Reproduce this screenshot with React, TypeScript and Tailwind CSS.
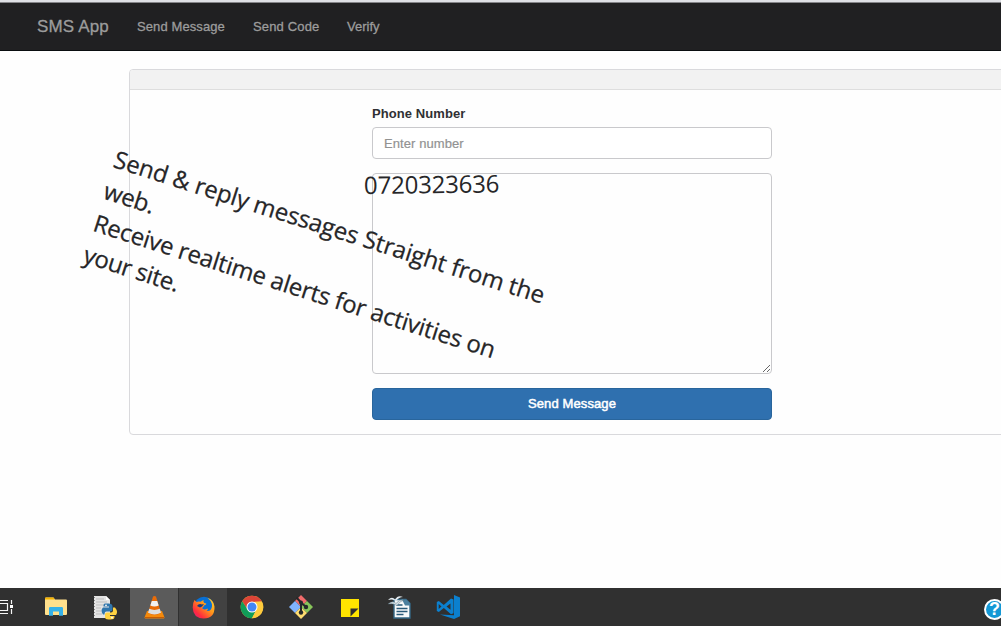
import React from 'react';

const Explorer = () => (
  <svg width="22" height="20" viewBox="0 0 22 20">
    <path d="M0 1.5Q0 .5 1 .5h7.500l1.500 2h11q1 0 1 1V17q0 1-1 1H1q-1 0-1-1z" fill="#ffe08c" />
    <path d="M0 1.5Q0 .5 1 .5h7.500l1.200 2H0z" fill="#f5b301" />
    <path d="M4 18.700v-7.400q0-1.300 1.300-1.300h11.400q1.300 0 1.300 1.300v7.400h-4V14.500H8v4.200z" fill="#35b1e8" />
  </svg>
);

const PythonFile = () => (
  <svg width="25" height="25" viewBox="0 0 25 25">
    <path d="M1 1h12l4 4v18H1z" fill="#e4e4e4" />
    <path d="M13 1l4 4h-4z" fill="#fff" />
    <path d="M3 4h8M3 7h11M3 10h8M3 13h5M3 16h5M3 19h6" stroke="#bdbdbd" />
    <path d="M1.500 2v21" stroke="#8a8a8a" strokeDasharray="1 2" />
    <path d="M12 8.500h3.500q4 0 4 3v3q0 2-2 2h-4q-2 0-2 3H10q-3-4 0-7h6v-1h-5.500v-1q0-2 1.500-2z" fill="#2f75ac" />
    <path d="M20 12.500h2q3.500 4 1 7.500h-6v1h4.500v1q0 2.500-4 2.500h-2q-3.500 0-3.500-2.500v-2.500q0-2 2-2h4q2 0 2-2z" fill="#ffd342" />
    <circle cx="13" cy="10.300" r=".9" fill="#fff" />
    <circle cx="19" cy="22.700" r=".9" fill="#fff" />
  </svg>
);

const Cone = () => (
  <svg width="21" height="24" viewBox="0 0 21 24">
    <path d="M3 16h15l2.500 6.500q0 1-1 1h-18q-1 0-1-1z" fill="#f58a0b" />
    <path d="M9 1.500q1.500-1 3 0L17 18q-6.500 4-13 0z" fill="#e96c08" />
    <path d="M7.800 6h5.400l1.500 4.500q-4.200 2-8.400 0z" fill="#f2f2f2" />
    <path d="M5.200 13.800q5.300 2.200 10.600 0l1.200 4q-6.500 3.500-13 0z" fill="#dedede" />
    <path d="M1 22.500h19" stroke="#c65b03" />
  </svg>
);

const Firefox = () => (
  <svg width="23" height="23" viewBox="0 0 23 23">
    <defs>
      <linearGradient id="fox" x1="1" y1="0" x2="0" y2="1">
        <stop offset="0" stopColor="#ffdc2d" />
        <stop offset=".42" stopColor="#ff941b" />
        <stop offset=".75" stopColor="#ff2d3d" />
        <stop offset="1" stopColor="#e31587" />
      </linearGradient>
    </defs>
    <circle cx="12" cy="10.500" r="9.800" fill="#0870d5" />
    <path d="M2.500 4l2 2q2-1 4-.3l3-1.700q-.5 2 .8 3l2 .5q.5 1-2.300 2-.6 2-2 2.500 1.800 2.500 5.500.5 1 1.500-1 2.500 5 .8 5.500-5Q20 5 15.500 2q6 1.500 7 8.500Q23 22.500 11.500 22.500 1 22 .7 11.500.6 7 2.500 4z" fill="url(#fox)" />
    <path d="M5 10q2-3 5-1.500l2-.5-2 2.500-2 1z" fill="#123c83" />
  </svg>
);

const Chrome = () => (
  <svg width="24" height="24" viewBox="0 0 24 24">
    <circle cx="12" cy="12" r="11.300" fill="#ffcb3d" />
    <path d="M2.200 6.350A11.300 11.300 0 0 1 21.800 6.350L12 6.900 7.600 14.600z" fill="#dc4437" />
    <path d="M2.200 6.350A11.300 11.300 0 0 0 12 23.300L16.400 14.600H7.600z" fill="#109d59" />
    <path d="M12 6.900h10a11.300 11.300 0 0 1-10 16.400l4.400-8.700z" fill="#ffcb3d" />
    <circle cx="12" cy="12" r="5.500" fill="#fff" />
    <circle cx="12" cy="12" r="4.500" fill="#4386f5" />
  </svg>
);

const GitIcon = () => (
  <svg width="24" height="24" viewBox="0 0 24 24">
    <path d="M12 0l6 6-6 6-6-6z" fill="#f06b6b" />
    <path d="M6 6l6 6-6 6-6-6z" fill="#80b3ff" />
    <path d="M18 6l6 6-6 6-6-6z" fill="#87c55a" />
    <path d="M12 12l6 6-6 6-6-6z" fill="#ffdd70" />
    <path d="M7.500 2.500l4.500 5v10M12 7.500l5 4.500" stroke="#25292b" strokeWidth="2" fill="none" />
    <circle cx="12" cy="7.500" r="2" fill="#25292b" />
    <circle cx="12" cy="17.500" r="2.200" fill="#25292b" />
    <circle cx="17" cy="12" r="2.200" fill="#25292b" />
  </svg>
);

const Note = () => (
  <svg width="18" height="18" viewBox="0 0 18 18">
    <path d="M0 0h18v18H0z" fill="#ffe500" />
    <path d="M9.500 9.500H17.500l-8 8z" fill="#303030" />
  </svg>
);

const Writer = () => (
  <svg width="24" height="24" viewBox="0 0 24 24">
    <path d="M6 4.500h12l4 4V23H6z" fill="#f8fafb" stroke="#356887" strokeWidth="1.400" />
    <path d="M14 4.500h4l4 4v2h-5z" fill="#4b7f9e" />
    <path d="M8.500 10h6M8.500 13.500h11M8.500 16.500h11M8.500 19.500h7" stroke="#285978" strokeWidth="1.300" />
    <path d="M0 5q4-4 7-.5Q10-.5 15 2q-4 0-7 4Q5 3.500 0 5z" fill="#e5edf1" />
    <path d="M0 9q5-4 8-.5Q11 4 16 5q-4 1-7 5.500Q6 8 0 9z" fill="#d4e1e8" stroke="#47616f" strokeWidth=".4" />
  </svg>
);

const Code = () => (
  <svg width="25" height="24" viewBox="0 0 25 24">
    <path d="M18 0l6 2.600v18.600L18 24 4 19.500l14 .8z" fill="#0b80cf" />
    <path fillRule="evenodd" d="M15 3.500l2.500 1v13.800l-2.500 1-7.200-6.200-5 4L.8 16V7l2-1 5 4zM14.500 8.500L10.500 11.500l4 3.200zM2.700 9v5l2.800-2.500z" fill="#0b80cf" />
  </svg>
);

const TaskView = () => (
  <svg width="14" height="16" viewBox="0 0 14 16" fill="none" stroke="#f4f4f4" strokeWidth="1.200">
    <path d="M0 4.500h7.500v7H0M0 1.500h8M0 14.500h8M11.500 1v4M11.500 10v5" />
    <path d="M10 6h3v3h-3z" fill="#fff" stroke="none" />
  </svg>
);

export default function App() {
  return (
    <div className="relative flex h-[626px] w-[1001px] flex-col overflow-hidden bg-[#fefefe] font-['Liberation_Sans',Arial,sans-serif] text-[13px]">
      <div className="h-[3px] shrink-0 border-b border-[#858589] bg-[#dfe0e5]" />
      <nav className="flex h-12 shrink-0 items-center border-b border-[#0a0d10] bg-[#202022] pl-[37px] text-[#9c9c9c] [-webkit-text-stroke:0.3px_#9c9c9c]">
        <a className="mr-7 w-[72px] whitespace-nowrap text-[17px] tracking-[0.15px]">SMS App</a>
        <a className="mr-7 w-[88px] whitespace-nowrap tracking-[0.1px]">Send Message</a>
        <a className="mr-7 w-[66px] whitespace-nowrap tracking-[0.15px]">Send Code</a>
        <a>Verify</a>
      </nav>

      <main className="flex-1 pt-[18px] pl-[129px]">
        <section className="h-[366px] w-[900px] rounded-[4px] border border-[#d9d9dc]">
          <div className="h-5 rounded-t-[3px] border-b border-[#dedede] bg-[#f2f2f2]" />
          <form className="ml-[242px] flex w-[400px] flex-col pt-[14px]">
            <label className="mb-[5px] h-[18px] font-bold leading-[19px] tracking-[0.08px] text-[#303033]">Phone Number</label>
            <input
              placeholder="Enter number"
              className="mb-[14px] h-8 rounded-[4px] border border-[#c9c9cc] bg-white px-[11px] tracking-[0.08px] outline-none placeholder:text-[#929292] [-webkit-text-stroke:0.2px_#929292]"
            />
            <textarea className="mb-[14px] block h-[201px] resize rounded-[4px] border border-[#c9c9cc] bg-transparent outline-none" />
            <button type="button" className="h-8 rounded-[4px] border border-[#29659c] bg-[#2f70af] tracking-[0.12px] text-white [-webkit-text-stroke:0.5px_white]">
              Send Message
            </button>
          </form>
        </section>
      </main>

      <footer className="flex h-[38px] shrink-0 items-stretch bg-[#303030]">
        <div className="flex w-[31px] items-center"><TaskView /></div>
        <div className="flex w-[49px] items-center justify-center"><Explorer /></div>
        <div className="flex w-[50px] items-center justify-center pt-px pl-px"><PythonFile /></div>
        <div className="flex w-12 items-center justify-center bg-[#5b5b5b]"><Cone /></div>
        <div className="ml-px flex w-12 items-center justify-center bg-[#424242]"><Firefox /></div>
        <div className="flex w-[50px] items-center justify-center"><Chrome /></div>
        <div className="flex w-12 items-center justify-center"><GitIcon /></div>
        <div className="flex w-[50px] items-center justify-center pt-px"><Note /></div>
        <div className="flex w-[49px] items-center justify-center"><Writer /></div>
        <div className="flex w-12 items-center justify-center"><Code /></div>
        <div className="ml-auto flex w-[17px] items-center overflow-hidden pt-1">
          <div className="flex size-[21px] shrink-0 items-center justify-center rounded-full border-2 border-white bg-[#1498d5] text-[18px] font-bold text-white">?</div>
        </div>
      </footer>

      <p className="absolute left-[364px] top-[168px] origin-left -rotate-[0.7deg] whitespace-nowrap font-['Open_Sans',sans-serif] text-[24px] leading-[33px] tracking-[-0.2px] text-[#262628]">
        0720323636
      </p>
      <div className="absolute left-[120px] top-[142px] origin-top-left rotate-[17.7deg] whitespace-nowrap font-['Open_Sans',sans-serif] text-[24px] leading-[33.4px] text-[#262628] [-webkit-text-stroke:0.25px_#262628]">
        <p className="tracking-[-0.12px]">Send &amp; reply messages Straight from the</p>
        <p className="tracking-[-0.3px]">web.</p>
        <p className="tracking-[-0.24px]">Receive realtime alerts for activities on</p>
        <p className="tracking-[-0.4px]">your site.</p>
      </div>
    </div>
  );
}
